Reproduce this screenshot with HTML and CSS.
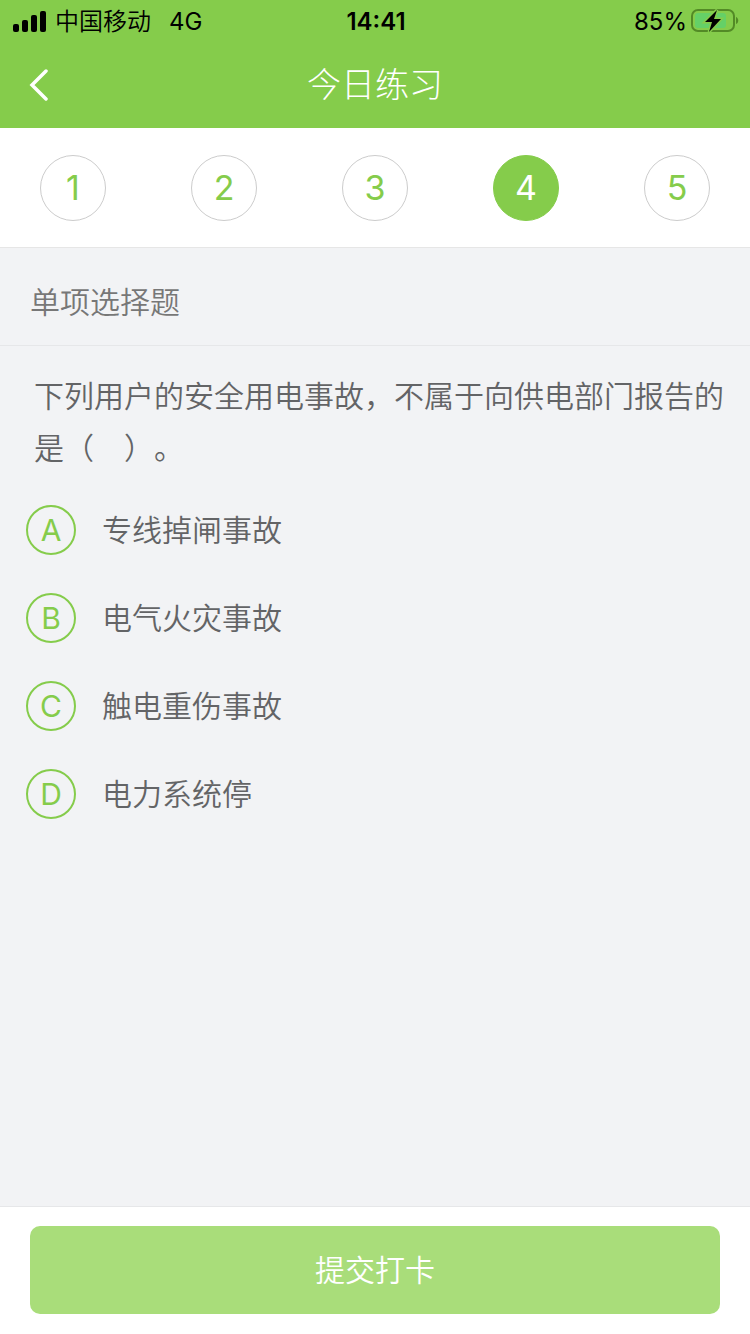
FILE: index.html
```html
<!DOCTYPE html>
<html lang="zh-CN">
<head>
    <meta charset="UTF-8">
    <meta name="viewport" content="width=device-width, initial-scale=1.0">
    <title>今日练习</title>
    <link rel="stylesheet" href="styles.css">
</head>
<body>
    <header class="header">
        <div class="status-bar">
            <div class="carrier">
                <svg class="signal" viewBox="0 0 34 22" aria-hidden="true">
                    <rect x="0" y="13" width="6" height="8" rx="2"/>
                    <rect x="9" y="9" width="6" height="12" rx="2"/>
                    <rect x="18" y="4" width="6" height="17" rx="2"/>
                    <rect x="27" y="0" width="6" height="21" rx="2"/>
                </svg>
                <span>中国移动</span>
                <span class="network">4G</span>
            </div>
            <div class="time">14:41</div>
            <div class="power">
                <span class="percent">85%</span>
                <svg class="battery" viewBox="0 0 48 26" aria-hidden="true">
                    <rect x="1" y="1" width="42" height="21" rx="6" fill="none" stroke="#538a26" stroke-width="2"/>
                    <rect x="4" y="4" width="31" height="15" rx="3" fill="#65d067"/>
                    <path d="M45 8v7c3-1 3-6 0-7z" fill="#538a26"/>
                    <path d="M26 1 14 13h7l-3 10L30 10h-7z" fill="#000" stroke="#85cc4b" stroke-width="3" paint-order="stroke"/>
                </svg>
            </div>
        </div>
        <div class="nav">
            <button class="back" type="button" aria-label="返回">
                <svg viewBox="0 0 20 32" aria-hidden="true">
                    <path d="M17 2 3 16l14 14" fill="none" stroke="#fff" stroke-width="3.5" stroke-linecap="round"/>
                </svg>
            </button>
            <h1 class="title">今日练习</h1>
        </div>
    </header>

    <nav class="steps">
        <button class="step" type="button">1</button>
        <button class="step" type="button">2</button>
        <button class="step" type="button">3</button>
        <button class="step active" type="button">4</button>
        <button class="step" type="button">5</button>
    </nav>

    <main class="content">
        <h2 class="type">单项选择题</h2>
        <fieldset class="question">
            <legend class="subject">下列用户的安全用电事故，不属于向供电部门报告的是（　）。</legend>
            <label class="option">
                <span class="mark"><input type="radio" name="answer" value="A"><span>A</span></span>
                <span>专线掉闸事故</span>
            </label>
            <label class="option">
                <span class="mark"><input type="radio" name="answer" value="B"><span>B</span></span>
                <span>电气火灾事故</span>
            </label>
            <label class="option">
                <span class="mark"><input type="radio" name="answer" value="C"><span>C</span></span>
                <span>触电重伤事故</span>
            </label>
            <label class="option">
                <span class="mark"><input type="radio" name="answer" value="D"><span>D</span></span>
                <span>电力系统停</span>
            </label>
        </fieldset>
    </main>

    <footer class="footer">
        <button class="submit" type="button">提交打卡</button>
    </footer>
</body>
</html>
```
FILE: styles.css
```css
* {
    box-sizing: border-box;
}

body {
    margin: 0;
    min-height: 100vh;
    display: flex;
    flex-direction: column;
    font-family: Inter, "Noto Sans CJK SC", sans-serif;
    font-weight: 350;
    font-size: 30px;
    line-height: 40px;
    color: #636466;
    background-color: #f2f3f5;
    text-spacing-trim: space-all;
}

button {
    padding: 0;
    border: none;
    background: none;
    font: inherit;
    cursor: pointer;
}

.header {
    background-color: #85cc4b;
}

.status-bar {
    height: 42px;
    padding: 2px 11px 0 13px;
    display: grid;
    grid-template-columns: 1fr auto 1fr;
    align-items: center;
    font-size: 24px;
    line-height: 40px;
    color: #000;
}

.carrier,
.power {
    display: flex;
    align-items: center;
}

.signal {
    width: 34px;
    height: 22px;
    margin-right: 8px;
}

.network {
    margin-left: 18px;
    font-weight: 400;
}

.time {
    font-weight: 600;
}

.power {
    justify-content: flex-end;
    gap: 4px;
}

.percent {
    font-weight: 400;
}

.battery {
    width: 48px;
    height: 26px;
}

.nav {
    height: 86px;
    padding: 0 29px;
    display: grid;
    grid-template-columns: 1fr auto 1fr;
    align-items: center;
}

.back {
    justify-self: start;
    display: flex;
}

.back svg {
    width: 20px;
    height: 32px;
}

.title {
    margin: 0;
    font-size: 34px;
    font-weight: 300;
    color: #fff;
}

.steps {
    height: 120px;
    padding: 0 40px;
    display: flex;
    align-items: center;
    justify-content: space-between;
    border-bottom: 1px solid #e6e6e6;
    background-color: #fff;
}

.step {
    width: 66px;
    height: 66px;
    border: 1px solid #ccc;
    border-radius: 50%;
    font-size: 34px;
    font-weight: 400;
    color: #85cc4b;
}

.step.active {
    border-color: #85cc4b;
    background-color: #85cc4b;
    color: #fff;
}

.content {
    flex: 1;
}

.type {
    margin: 0;
    padding: 34px 30px 23px;
    border-bottom: 1px solid #e6e7e9;
    font-size: 30px;
    font-weight: 350;
    color: #777;
}

.question {
    margin: 0;
    padding: 12px 24px 0 26px;
    border: none;
}

.subject {
    padding: 24px 0 0 8px;
    line-height: 52px;
}

.option {
    height: 88px;
    display: flex;
    align-items: center;
    gap: 26px;
}

.mark {
    display: grid;
    place-items: center;
    font-weight: 400;
    color: #85cc4b;
}

.mark > * {
    grid-area: 1 / 1;
}

.mark input {
    appearance: none;
    width: 50px;
    height: 50px;
    margin: 0;
    border: 2px solid #85cc4b;
    border-radius: 50%;
}

.footer {
    padding: 19px 30px 20px;
    border-top: 1px solid #e6e7e9;
    background-color: #fff;
}

.submit {
    width: 100%;
    height: 88px;
    border-radius: 10px;
    background-color: #a9dd7a;
    color: #fff;
}
```
